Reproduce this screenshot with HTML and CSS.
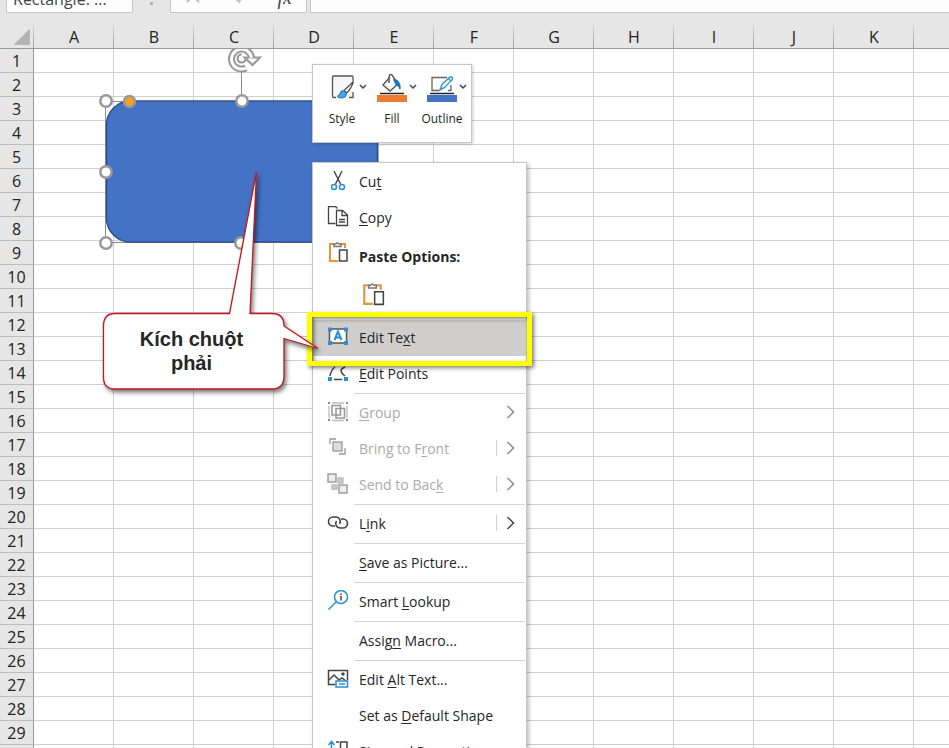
FILE: index.html
```html
<!DOCTYPE html>
<html lang="vi">
<head>
    <meta charset="UTF-8">
    <meta name="viewport" content="width=device-width, initial-scale=1.0">
    <title>Edit Text - Excel</title>
    <link rel="stylesheet" href="styles.css">
</head>
<body>

    <!-- formula bar -->
    <div class="formula-bar">
        <input class="name-box" type="text" value="Rectangle: ..." aria-label="Name Box">
        <span class="dots"></span>
        <div class="fx-box">
            <svg width="16" height="14" viewBox="0 0 16 14"><path d="M2 0l12 12M14 0L2 12" stroke="#bdbdbd" stroke-width="2"/></svg>
            <svg width="16" height="14" viewBox="0 0 16 14"><path d="M3 6l5 5 7-11" fill="none" stroke="#c4c4c4" stroke-width="3"/></svg>
            <span class="fx">fx</span>
        </div>
        <input class="formula-input" type="text" aria-label="Formula">
    </div>

    <!-- sheet -->
    <main class="sheet">
        <table class="grid">
            <thead>
                <tr id="cols"><th class="corner"></th></tr>
            </thead>
            <tbody id="rows"></tbody>
        </table>

        <svg class="shape" width="300" height="205" viewBox="90 49 300 205">
            <path d="M105.500 101.500H378V242.500H105.500Z" fill="none" stroke="#8c8c8c"/>
            <path d="M241.500 70V96" stroke="#8c8c8c"/>
            <rect x="106.500" y="101" width="271" height="141" rx="24" fill="#4472c4" stroke="#2f528f" stroke-width="1.500"/>
            <g fill="#fff" stroke="#979797" stroke-width="2.500">
                <circle cx="106" cy="101" r="5.700"/>
                <circle cx="242" cy="101" r="5.700"/>
                <circle cx="106" cy="172" r="5.700"/>
                <circle cx="106" cy="243" r="5.700"/>
                <circle cx="241" cy="243" r="5.700"/>
                <circle cx="129.500" cy="101.500" r="5.500" fill="#f7a11b"/>
            </g>
            <!-- rotate handle -->
            <g fill="none" stroke="#979797">
                <path d="M251.500 58A10 10 0 1 0 246 68" stroke-width="7"/>
                <path d="M244.500 57.500h15.500l-7.500 7.500z" fill="#fff" stroke-width="2"/>
                <path d="M251.500 58A10 10 0 1 0 246 68" stroke="#fff" stroke-width="3"/>
                <path d="M241.500 54.500a4 4 0 1 0 4 5" stroke-width="2"/>
            </g>
        </svg>
    </main>

    <!-- mini toolbar -->
    <div class="mini-toolbar">
        <button class="tool">
            <svg width="30" height="30" viewBox="0 0 30 30">
                <path d="M9 25.500H6.500Q5.500 25.500 5.500 24.500V5Q5.500 4 6.500 4H25Q26 4 26 5V9M26 20V25.500H22" fill="#f7f7f7" stroke="#555" stroke-width="1.300"/>
                <path d="M26.500 9.500L17 18.500l2.500 2.500Q24 17 26.500 9.500z" fill="#fff" stroke="#444" stroke-width="1.200"/>
                <path d="M16.500 18.500q-3 0-3.500 3-.500 2-3 3 2 1.500 5 1.500 4.500-.500 4.500-4.500z" fill="#4ba3dc" stroke="#1a74b8"/>
            </svg>
            <svg class="chev" width="8" height="6" viewBox="0 0 8 6"><path d="M1 1l3 3 3-3"/></svg>
            <span>Style</span>
        </button>
        <button class="tool">
            <svg width="30" height="30" viewBox="0 0 30 30">
                <path d="M13 5L6 13l7 6 8-7-6-9q-3-2-3 3v5" fill="none" stroke="#555" stroke-width="1.400"/>
                <path d="M17 8q6 0 6 9-1-4-3.500-4z" fill="#1a74b8" stroke="#1a74b8" stroke-width="1.500"/>
                <path d="M3 21.500H27" stroke="#222" stroke-width="1.500"/>
                <rect y="23" width="30" height="7" fill="#ed7d31"/>
            </svg>
            <svg class="chev" width="8" height="6" viewBox="0 0 8 6"><path d="M1 1l3 3 3-3"/></svg>
            <span>Fill</span>
        </button>
        <button class="tool">
            <svg width="30" height="30" viewBox="0 0 30 30">
                <path d="M20 5.500H5V18.500H12M21 18.500H24V13" fill="none" stroke="#666" stroke-width="1.300"/>
                <path d="M13 18l2-5.500 8-7.500q3-.500 2.500 2.500l-8 8zM21.500 6.500l2.500 2.500" fill="#fff" stroke="#3a96d4" stroke-width="1.500"/>
                <path d="M3 21.500H27" stroke="#222" stroke-width="1.500"/>
                <rect y="23" width="30" height="7" fill="#4472c4"/>
            </svg>
            <svg class="chev" width="8" height="6" viewBox="0 0 8 6"><path d="M1 1l3 3 3-3"/></svg>
            <span>Outline</span>
        </button>
    </div>

    <!-- context menu -->
    <div class="menu">
        <button class="item">
            <svg width="22" height="22" viewBox="0 0 22 22">
                <path d="M7 1l6.500 13M15 1L8.500 14" fill="none" stroke="#444" stroke-width="1.400"/>
                <circle cx="7" cy="17" r="2.500" fill="none" stroke="#2b8fd0" stroke-width="1.500"/><circle cx="15" cy="17" r="2.500" fill="none" stroke="#2b8fd0" stroke-width="1.500"/>
            </svg>
            <span>Cu<u>t</u></span>
        </button>
        <button class="item">
            <svg width="22" height="22" viewBox="0 0 22 22" fill="none" stroke="#444" stroke-width="1.300">
                <path d="M8.500 17.500H1.500V.500H8.500L10.500 2.500"/><path d="M9.500 4.500H15.500L20.500 9V19.500H9.500ZM15 4.500V9.500H20.500M12 13.500H18M12 16H18"/>
            </svg>
            <span><u>C</u>opy</span>
        </button>
        <div class="gap"></div>
        <div class="item title">
            <svg width="22" height="22" viewBox="0 0 22 22" fill="none" stroke-width="1.500">
                <path d="M7 3H3V20H11M13 3H18V7" stroke="#e8943a" stroke-width="2"/>
                <path d="M7 5.500V3H9Q10 .500 12 3H14V5.500Z" stroke="#777" fill="#fff"/><path d="M12.500 9H20V20H12.500Z" stroke="#444" fill="#fff"/>
            </svg>
            <span>Paste Options:</span>
        </div>
        <div class="paste-row">
            <button class="paste" aria-label="Paste">
                <svg width="24" height="24" viewBox="0 0 22 22" fill="none" stroke-width="1.400">
                    <path d="M7 3H3V20H11M13 3H18V7" stroke="#e8943a" stroke-width="2"/>
                    <path d="M7 5.500V3H9Q10 .500 12 3H14V5.500Z" stroke="#777" fill="#fff"/><path d="M12.500 9H20.500V20.500H12.500Z" stroke="#444" fill="#fff"/>
                </svg>
            </button>
        </div>
        <button class="item active">
            <svg width="22" height="22" viewBox="0 0 22 22">
                <rect x="2.500" y="3" width="17" height="14" fill="#fff" stroke="#555" stroke-width="1.500"/>
                <path d="M7.500 14L11 5.500 14.500 14M8.500 11.500h5" fill="none" stroke="#2b8fd0" stroke-width="2"/>
                <path d="M1 1.500h4v4H1zM17 1.500h4v4h-4zM1 15h4v4H1zM17 15h4v4h-4z" fill="#2b8fd0"/>
            </svg>
            <span>Edit Te<u>x</u>t</span>
        </button>
        <button class="item">
            <svg width="22" height="22" viewBox="0 0 22 22">
                <path d="M3 14Q4 8 8 5M18 5Q10 8 18 14M7 17.500H15" fill="none" stroke="#444" stroke-width="1.500"/>
                <path d="M1 15h4v4H1zM17 15h4v4h-4z" fill="#2b8fd0"/>
            </svg>
            <span><u>E</u>dit Points</span>
        </button>
        <hr>
        <button class="item" disabled>
            <svg width="22" height="22" viewBox="0 0 22 22" fill="none" stroke="#999" stroke-width="1.300">
                <path d="M5 4.500H13.500V14H5ZM9 7.500H17.500V17H9Z" stroke-width="1.600"/>
                <path d="M5 2H17M5 19.500H17M2 5V17M20 5V17" stroke="#bbb"/>
                <path d="M1 1h2v2H1zM19 1h2v2h-2zM1 18h2v2H1zM19 18h2v2h-2z" fill="#888" stroke="none"/>
            </svg>
            <span><u>G</u>roup</span>
            <svg class="arrow" width="10" height="14" viewBox="0 0 10 14"><path d="M1.500 1l6 6-6 6"/></svg>
        </button>
        <button class="item" disabled>
            <svg width="22" height="22" viewBox="0 0 22 22" fill="none" stroke="#999" stroke-width="1.300">
                <path d="M3 7V2H9M12 17H18V11"/><rect x="6" y="5" width="9" height="9" fill="#ddd"/>
            </svg>
            <span>Bring to F<u>r</u>ont</span>
            <svg class="arrow split" width="10" height="14" viewBox="0 0 10 14"><path d="M1.500 1l6 6-6 6"/></svg>
        </button>
        <button class="item" disabled>
            <svg width="22" height="22" viewBox="0 0 22 22" fill="#eee" stroke="#999" stroke-width="1.400">
                <path d="M11 5h5v5h-5zM5 12h5v4H5z" fill="#ccc" stroke="#bbb"/>
                <rect x="1" y="1" width="8" height="8"/><rect x="12" y="12" width="8" height="8"/>
            </svg>
            <span>Send to Bac<u>k</u></span>
            <svg class="arrow split" width="10" height="14" viewBox="0 0 10 14"><path d="M1.500 1l6 6-6 6"/></svg>
        </button>
        <hr>
        <button class="item">
            <svg width="22" height="22" viewBox="0 0 22 22" fill="none" stroke="#444" stroke-width="1.600">
                <path d="M8 14H6A4.500 4.500 0 0 1 6 5H9A4.500 4.500 0 0 1 12.500 12"/><path d="M14 7H16A4.500 4.500 0 0 1 16 16H13A4.500 4.500 0 0 1 9.500 9"/>
            </svg>
            <span>L<u>i</u>nk</span>
            <svg class="arrow split" width="10" height="14" viewBox="0 0 10 14"><path d="M1.500 1l6 6-6 6"/></svg>
        </button>
        <hr>
        <button class="item"><i></i><span><u>S</u>ave as Picture...</span></button>
        <hr>
        <button class="item">
            <svg width="22" height="22" viewBox="0 0 22 22" fill="none" stroke="#2b8fd0" stroke-width="1.500">
                <circle cx="14" cy="7" r="6.500"/><path d="M9.500 11.500L1.500 19.500"/><path d="M14 6v4.500M14 3.500v1.500" stroke="#444"/>
            </svg>
            <span>Smart <u>L</u>ookup</span>
        </button>
        <hr>
        <button class="item"><i></i><span>Assig<u>n</u> Macro...</span></button>
        <hr>
        <button class="item">
            <svg width="22" height="22" viewBox="0 0 22 22" fill="none" stroke="#444" stroke-width="1.500">
                <path d="M8 16.500H1.500V2.500H20.500V12"/><path d="M2 12l5-5 5 5 3-2 4 3"/><circle cx="16" cy="6" r="1" fill="#444"/>
                <path d="M9 13H20.500V19H9ZM12 16H18" fill="#fff" stroke="#2b8fd0"/>
            </svg>
            <span>Edit <u>A</u>lt Text...</span>
        </button>
        <button class="item"><i></i><span>Set as <u>D</u>efault Shape</span></button>
        <button class="item">
            <svg width="22" height="22" viewBox="0 0 22 22" fill="none" stroke="#444" stroke-width="1.500">
                <path d="M4.500 20V2M1.500 5l3-3.500 3 3.500" stroke="#2b8fd0"/><path d="M9 2h3M13.500 2h6.500V15H13.500Z"/>
            </svg>
            <span>Si<u>z</u>e and Properties...</span>
        </button>
    </div>

    <!-- frame around the Edit Text item -->
    <div class="highlight"></div>

    <!-- callout -->
    <div class="callout">
        <svg width="220" height="222" viewBox="101 170 220 222">
            <path d="M115 313.500H229.500L256.500 172L250 313.500H272Q284 313.500 284 326L318 348.500L284 338.500V376Q284 389 272 389H115Q103.500 389 103.500 377V326Q103.500 313.500 115 313.500Z" fill="#fff" stroke="#c4161c" stroke-width="1.300"/>
        </svg>
        <p>Kích chuột<br>phải</p>
    </div>

<script>
    // column letters and numbered rows
    const letters = 'ABCDEFGHIJK'
    const cols = document.getElementById('cols')
    for (const l of letters + ' ') {
        const th = document.createElement('th')
        th.textContent = l
        cols.appendChild(th)
    }
    const rows = document.getElementById('rows')
    for (let r = 1; r <= 30; r++) {
        const tr = document.createElement('tr')
        tr.innerHTML = '<th>' + r + '</th>' + '<td></td>'.repeat(letters.length + 1)
        rows.appendChild(tr)
    }
</script>
</body>
</html>
```
FILE: styles.css
```css
* {
    box-sizing: border-box;
}
body {
    margin: 0;
    height: 100vh;
    overflow: hidden;
    position: relative;
    display: flex;
    flex-direction: column;
    background: #e6e6e6;
    color: #262626;
    font-family: "Open Sans", "Noto Sans", sans-serif;
}
button {
    font: inherit;
    color: inherit;
    background: none;
    border: none;
    padding: 0;
    text-align: left;
}

.formula-bar {
    flex: none;
    height: 25px;
    padding-left: 6px;
    display: flex;
    align-items: flex-start;
    overflow: hidden;
}
.name-box,
.fx-box,
.formula-input {
    height: 24px;
    margin-top: -11px;
    border: 1px solid #c6c6c6;
    background: #fdfdfd;
}
.name-box {
    width: 127px;
    padding: 0 6px 5px;
    font: 16px "Open Sans", sans-serif;
    color: #444;
}
.dots {
    width: 3px;
    height: 3px;
    margin: 2px 17px;
    background: #b4b4b4;
}
.fx-box {
    width: 137px;
    padding: 0 14px 8px;
    display: flex;
    justify-content: space-between;
    align-items: center;
}
.fx {
    font: italic 20px "Liberation Serif", serif;
    color: #444;
}
.formula-input {
    flex: 1;
    margin-left: 3px;
    border-right: none;
}

/* sheet */
.sheet {
    flex: 1;
    min-height: 0;
    overflow: hidden;
    background: #fff;
}
.grid {
    width: 994px;
    table-layout: fixed;
    border-collapse: separate;
    border-spacing: 0;
}
.grid th {
    width: 80px;
    height: 24px;
    padding: 0;
    background: #e6e6e6;
    border: 0 solid #ababab;
    font-size: 16px;
    line-height: 22px;
    font-weight: normal;
    color: #222;
}
.grid thead th {
    border-bottom: 1px solid #999;
    background: linear-gradient(#d8d8d8, #999) right / 1px 100% no-repeat #e6e6e6;
}
.grid tbody th {
    border-right: 1px solid #999;
    border-bottom: 1px solid #bdbdbd;
}
.grid thead .corner {
    width: 34px;
    background:
        linear-gradient(#d8d8d8, #999) right / 1px 100% no-repeat,
        linear-gradient(to bottom right, transparent 50%, #b4b4b4 50%) 14px 4px / 16px 16px no-repeat #e6e6e6;
}
.grid td {
    padding: 0;
    border-right: 1px solid #d0d0d0;
    border-bottom: 1px solid #d0d0d0;
}
.shape {
    position: absolute;
    left: 90px;
    top: 49px;
}

/* mini toolbar */
.mini-toolbar {
    position: absolute;
    left: 312px;
    top: 64px;
    width: 160px;
    height: 79px;
    padding: 7px 4px;
    display: flex;
    background: #fff;
    border: 1px solid #c6c6c6;
    box-shadow: 1px 1px 3px rgba(0, 0, 0, 0.2);
}
.tool {
    width: 50px;
    display: grid;
    grid-template-columns: 10px 30px 10px;
    grid-template-rows: 30px 32px;
    align-items: center;
    font-size: 12px;
}
.tool svg:first-child {
    grid-column: 2;
}
.tool span {
    grid-column: 1 / 4;
    text-align: center;
}
.chev {
    justify-self: end;
}
.chev path,
.arrow path {
    fill: none;
    stroke: #444;
    stroke-width: 1.5;
}

/* context menu */
.menu {
    position: absolute;
    left: 312px;
    top: 162px;
    width: 215px;
    padding: 1px 0;
    background: #fff;
    border: 1px solid #c6c6c6;
    box-shadow: 2px 2px 4px rgba(0, 0, 0, 0.25);
    font-size: 14px;
}
.item {
    width: 100%;
    height: 36px;
    padding: 0 10px 2px 14px;
    display: grid;
    grid-template-columns: 22px 1fr auto;
    column-gap: 10px;
    align-items: center;
    white-space: nowrap;
}
.item u {
    text-underline-offset: 2px;
}
.item:disabled {
    color: #ababab;
}
.item:disabled .arrow path {
    stroke: #8c8c8c;
}
.title {
    font-weight: bold;
}
.title > svg:first-child {
    margin-bottom: 8px;
}
.active {
    background: #d0cecd;
}
.split {
    width: 20px;
    height: 16px;
    padding-left: 9px;
    border-left: 1px solid #d0d0d0;
}
.gap {
    height: 3px;
}
.paste-row {
    height: 45px;
    padding: 7px 48px;
}
.paste {
    display: block;
}
.paste svg {
    display: block;
}
.menu hr {
    height: 1px;
    margin: 1px 1px 1px 41px;
    border: none;
    background: #d4d4d4;
}

.highlight {
    position: absolute;
    left: 307px;
    top: 312px;
    width: 225px;
    height: 54px;
    border: 5px solid #ffff00;
    box-shadow: 2px 2px 4px rgba(0, 0, 0, 0.5), inset 2px 2px 4px rgba(0, 0, 0, 0.5);
}

/* callout */
.callout {
    position: absolute;
    left: 103px;
    top: 313px;
    width: 181px;
    height: 76px;
}
.callout svg {
    position: absolute;
    left: -2px;
    bottom: -3px;
    overflow: visible;
    filter: drop-shadow(2px 3px 2px rgba(0, 0, 0, 0.5));
}
.callout p {
    position: relative;
    margin: 0;
    padding: 14px 4px 0 0;
    text-align: center;
    font: bold 20px/24px "Liberation Sans", Arial, sans-serif;
    color: #262626;
}
```
